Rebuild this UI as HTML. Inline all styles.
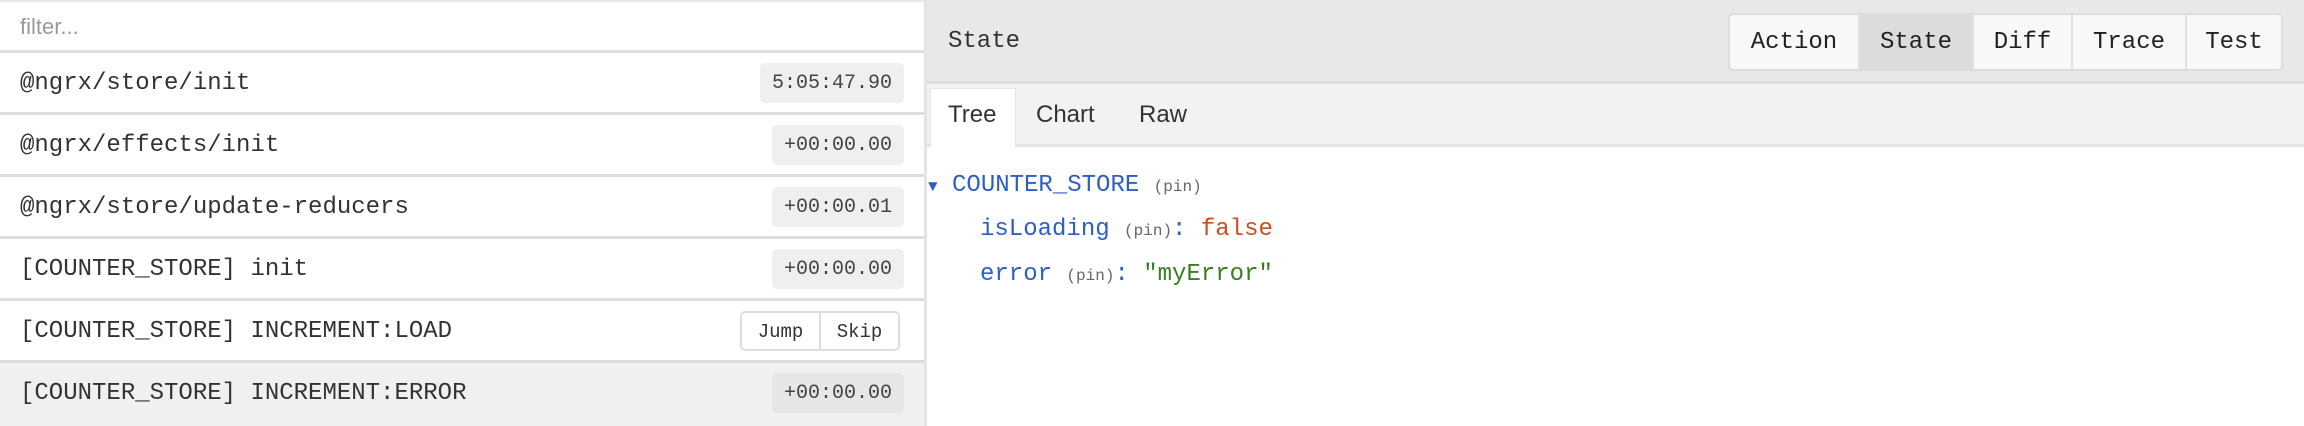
<!DOCTYPE html>
<html><head><meta charset="utf-8"><style>
*{box-sizing:border-box;margin:0;padding:0}
body{width:2304px;height:426px;overflow:hidden;background:#fff;font-family:"Liberation Mono",monospace;color:#333;position:relative}
.a{position:absolute}
.left{left:0;top:0;width:924px;height:426px;border-top:2px solid #e8e8e8}
.filter{left:0;top:0;width:924px;height:53px;border-bottom:3px solid #ddd;font-family:"Liberation Sans",sans-serif;font-size:22px;color:#999;padding:14px 0 0 20px}
.row{left:0;width:924px;height:62px;border-bottom:3px solid #ddd;font-size:24px;color:#333}
.row .t{position:absolute;left:20px;top:17px;white-space:pre}
.badge{position:absolute;right:20px;top:10px;height:40px;background:#efefef;border-radius:5px;font-size:20px;color:#444;padding:9px 12px 0}
.js{position:absolute;left:740px;top:10px;width:160px;height:40px;border:2px solid #ddd;border-radius:5px;font-size:19px;display:flex}
.js span{flex:1;text-align:center;padding-top:8px}
.js span+span{border-left:2px solid #ddd}
.div{left:924px;top:0;width:3px;height:426px;background:#e4e4e4}
.hdr{left:927px;top:0;width:1377px;height:84px;background:#e8e8e8;border-bottom:3px solid #ddd}
.btns{left:1728px;top:13px;height:58px;width:555px;border:2px solid #ddd;border-radius:5px;display:flex;background:#f8f8f8;overflow:hidden}
.btns div{font-size:24px;color:#222;text-align:center;padding-top:14px;border-left:2px solid #e0e0e0}
.tabs{left:927px;top:84px;width:1377px;height:63px;background:#f2f2f2;border-bottom:3px solid #e4e4e4}
.tab{font-family:"Liberation Sans",sans-serif;font-size:24px;color:#333;top:101px}
.tree{font-size:24px}
.pin{font-size:16px;color:#666}
.k{color:#2b5fc8}
</style></head><body>
<div class="a left"></div>
<div class="a filter">filter...</div>
<div class="a row" style="top:53px"><div class="t">@ngrx/store/init</div><div class="badge">5:05:47.90</div></div>
<div class="a row" style="top:115px"><div class="t">@ngrx/effects/init</div><div class="badge">+00:00.00</div></div>
<div class="a row" style="top:177px"><div class="t">@ngrx/store/update-reducers</div><div class="badge">+00:00.01</div></div>
<div class="a row" style="top:239px"><div class="t">[COUNTER_STORE] init</div><div class="badge">+00:00.00</div></div>
<div class="a row" style="top:301px"><div class="t">[COUNTER_STORE] INCREMENT:LOAD</div><div class="js"><span>Jump</span><span>Skip</span></div></div>
<div class="a row" style="top:363px;height:63px;background:#f0f0f0;border-bottom:none"><div class="t">[COUNTER_STORE] INCREMENT:ERROR</div><div class="badge" style="background:#e6e6e6">+00:00.00</div></div>
<div class="a div"></div>
<div class="a hdr"></div>
<div class="a" style="left:948px;top:28px;font-size:24px;color:#333">State</div>
<div class="a btns">
<div style="width:128px;border-left:none">Action</div>
<div style="width:114px;background:#dcdcdc">State</div>
<div style="width:99px">Diff</div>
<div style="width:114px">Trace</div>
<div style="flex:1">Test</div>
</div>
<div class="a tabs"></div>
<div class="a" style="left:930px;top:88px;width:86px;height:59px;background:#fff;border:1px solid #e6e6e6;border-bottom:none"></div>
<div class="a tab" style="left:948px">Tree</div>
<div class="a tab" style="left:1036px">Chart</div>
<div class="a tab" style="left:1139px">Raw</div>
<div class="a tree" style="left:928px;top:172px"><span class="k" style="font-size:16px">▼</span> <span class="k">COUNTER_STORE</span> <span class="pin">(pin)</span></div>
<div class="a tree" style="left:980px;top:216px"><span class="k">isLoading</span> <span class="pin">(pin)</span><span class="k">:</span> <span style="color:#c7501c">false</span></div>
<div class="a tree" style="left:980px;top:261px"><span class="k">error</span> <span class="pin">(pin)</span><span class="k">:</span> <span style="color:#3a7d23">"myError"</span></div>
</body></html>
